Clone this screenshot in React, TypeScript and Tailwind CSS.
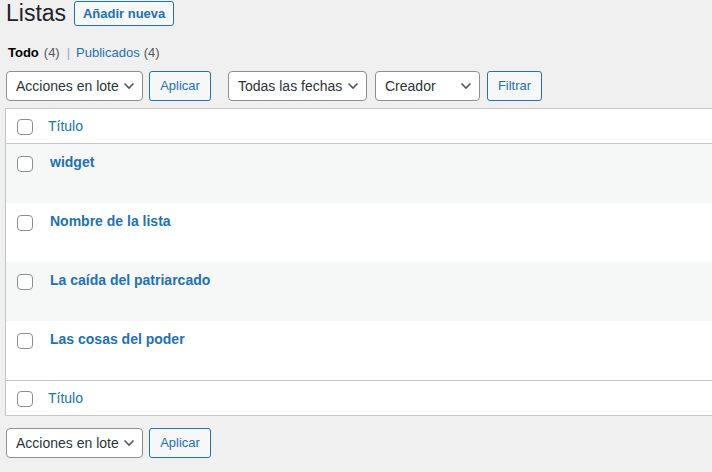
import React from "react";

const rows = ["widget", "Nombre de la lista", "La caída del patriarcado", "Las cosas del poder"];

const Chevron = () => (
  <svg width="12" height="8" viewBox="0 0 12 8" className="shrink-0">
    <polyline points="1.5,1.5 6,6 10.5,1.5" fill="none" stroke="#50575e" strokeWidth="1.6" />
  </svg>
);

const Select = ({ label, width }: { label: string; width: string }) => (
  <div
    className={`${width} h-[30px] flex items-center justify-between pl-[9px] pr-[7px] bg-white border border-[#8c8f94] rounded-[4px] text-[14px] text-[#2c3338]`}
  >
    <span>{label}</span>
    <Chevron />
  </div>
);

const Button = ({ label, width }: { label: string; width: string }) => (
  <div
    className={`${width} h-[30px] flex items-center justify-center bg-[#f6f7f7] border border-[#2271b1] rounded-[3px] text-[13px] text-[#2271b1]`}
  >
    {label}
  </div>
);

const Checkbox = () => (
  <div className="w-4 h-4 bg-white border border-[#8c8f94] rounded-[4px] shrink-0" />
);

export default function App() {
  return (
    <div className="w-[712px] h-[472px] overflow-hidden bg-[#f0f0f1] font-['Liberation_Sans',Arial,sans-serif] text-[#3c434a]">
      <div className="flex items-center gap-[8px] pl-[6px] pt-[1px] h-[26px]">
        <h1 className="text-[23px] leading-none text-[#1d2327]">Listas</h1>
        <div className="w-[100px] h-[25px] flex items-center justify-center border border-[#2271b1] rounded-[3px] bg-[#f6f7f7] text-[13px] font-bold text-[#2271b1]">
          Añadir nueva
        </div>
      </div>

      <div className="pl-[8px] mt-[19px] h-[16px] flex items-center text-[13px] text-[#50575e]">
        <span className="font-bold text-[#000]">Todo</span>
        <span className="ml-[5px]">(4)</span>
        <span className="ml-[7px] mr-[6px] text-[#a7aaad]">|</span>
        <span className="text-[#2271b1]">Publicados</span>
        <span className="ml-[4px]">(4)</span>
      </div>

      <div className="flex items-center pl-[6px] mt-[10px]">
        <Select label="Acciones en lote" width="w-[137px]" />
        <div className="ml-[6px]">
          <Button label="Aplicar" width="w-[62px]" />
        </div>
        <div className="ml-[17px]">
          <Select label="Todas las fechas" width="w-[139px]" />
        </div>
        <div className="ml-[8px]">
          <Select label="Creador" width="w-[105px]" />
        </div>
        <div className="ml-[7px]">
          <Button label="Filtrar" width="w-[55px]" />
        </div>
      </div>

      <div className="ml-[5px] mt-[7px] w-[720px] bg-white border border-[#c3c4c7]">
        <div className="h-[35px] flex items-center border-b border-[#c3c4c7]">
          <div className="pl-[11px] pt-[1px]">
            <Checkbox />
          </div>
          <span className="ml-[15px] text-[14px] text-[#2271b1]">Título</span>
        </div>
        {rows.map((title, i) => (
          <div key={title} className={`h-[59px] flex items-start ${i % 2 === 0 ? "bg-[#f6f7f7]" : "bg-white"}`}>
            <div className="pl-[11px] pt-[12px]">
              <Checkbox />
            </div>
            <span className="ml-[17px] mt-[8px] text-[14px] font-bold text-[#2271b1]">{title}</span>
          </div>
        ))}
        <div className="h-[35px] flex items-center border-t border-[#c3c4c7]">
          <div className="pl-[11px] pt-[1px]">
            <Checkbox />
          </div>
          <span className="ml-[15px] text-[14px] text-[#2271b1]">Título</span>
        </div>
      </div>

      <div className="flex items-center pl-[6px] mt-[12px]">
        <Select label="Acciones en lote" width="w-[137px]" />
        <div className="ml-[6px]">
          <Button label="Aplicar" width="w-[62px]" />
        </div>
      </div>
    </div>
  );
}
